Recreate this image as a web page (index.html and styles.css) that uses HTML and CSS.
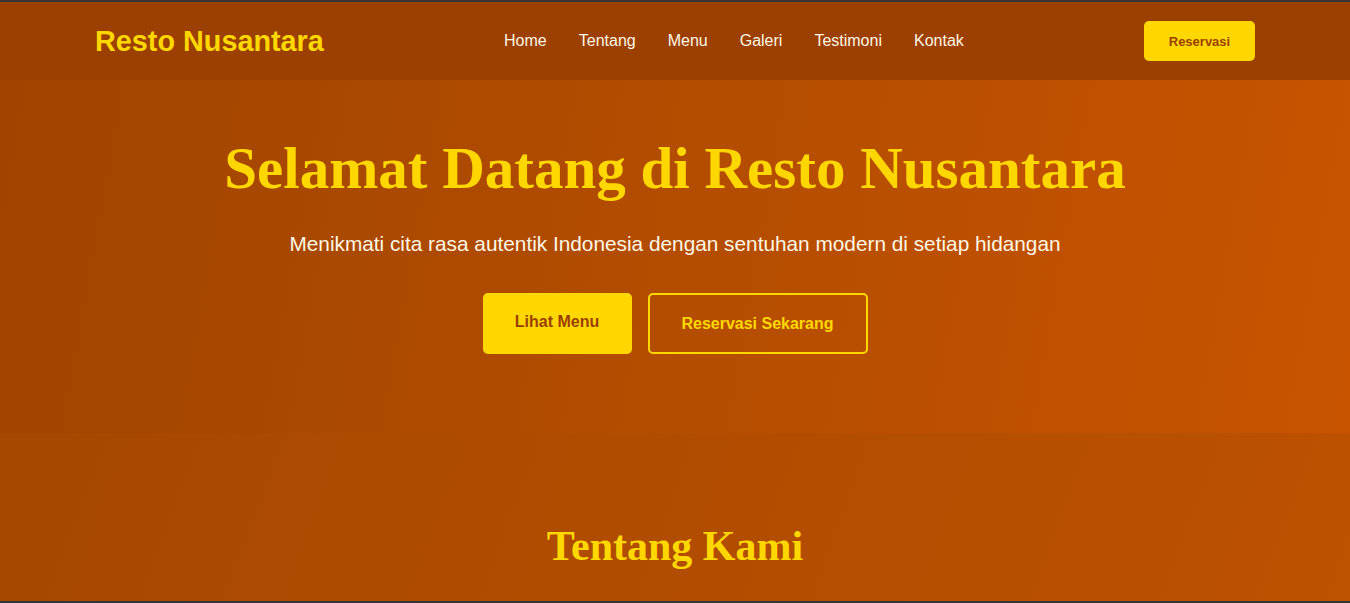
FILE: index.html
```html
<!DOCTYPE html>
<html lang="id">
<head>
<meta charset="utf-8">
<title>Resto Nusantara</title>
<link rel="stylesheet" href="styles.css">
</head>
<body>
<div class="frame">
  <header class="navbar">
    <div class="container nav-inner">
      <a class="logo" href="#">Resto Nusantara</a>
      <nav class="nav-links">
        <a href="#">Home</a>
        <a href="#">Tentang</a>
        <a href="#">Menu</a>
        <a href="#">Galeri</a>
        <a href="#">Testimoni</a>
        <a href="#">Kontak</a>
      </nav>
      <a class="btn-nav" href="#">Reservasi</a>
    </div>
  </header>

  <section class="hero">
    <h1 class="hero-title">Selamat Datang di Resto Nusantara</h1>
    <p class="hero-sub">Menikmati cita rasa autentik Indonesia dengan sentuhan modern di setiap hidangan</p>
    <div class="hero-actions">
      <a class="btn btn-solid" href="#">Lihat Menu</a>
      <a class="btn btn-outline" href="#">Reservasi Sekarang</a>
    </div>
  </section>

  <section class="about">
    <h2 class="section-title">Tentang Kami</h2>
  </section>
</div>
</body>
</html>
```

FILE: styles.css
```css
html {
  background: #353535;
}
body {
  margin: 0;
  font-family: "Liberation Sans", Arial, sans-serif;
}
a {
  text-decoration: none;
}
.frame {
  height: 599px;
  margin: 2px 0;
  overflow: hidden;
  background: linear-gradient(110deg, #a44700 0%, #b24d00 60%, #bd5200 100%);
}
.container {
  max-width: 1200px;
  margin: 0 auto;
  padding: 0 20px;
  box-sizing: border-box;
}
.navbar {
  background: #9b4000;
  height: 78px;
}
.nav-inner {
  height: 100%;
  display: flex;
  align-items: center;
  justify-content: space-between;
}
.logo {
  color: #ffd700;
  font-weight: bold;
  font-size: 28.8px;
  line-height: 1;
}
.nav-links {
  display: flex;
  gap: 32px;
}
.nav-links a {
  color: #fff6e6;
  font-size: 16px;
}
.btn-nav {
  background: #ffd700;
  color: #9a3f00;
  font-weight: bold;
  font-size: 13px;
  width: 111px;
  height: 40px;
  display: flex;
  align-items: center;
  justify-content: center;
  border-radius: 5px;
}
.hero {
  height: 353px;
  box-sizing: border-box;
  padding: 53px 20px 0;
  text-align: center;
  background: linear-gradient(100deg, #a04400 0%, #b14c00 45%, #c85400 100%);
}
.hero-title {
  margin: 0;
  font-family: "Liberation Serif", "Times New Roman", serif;
  font-weight: bold;
  font-size: 59px;
  line-height: 71px;
  color: #ffd700;
}
.hero-sub {
  margin: 25px 0 0;
  font-size: 20.8px;
  line-height: 30px;
  color: #fff6e6;
}
.hero-actions {
  margin-top: 34px;
  display: flex;
  justify-content: center;
  gap: 16px;
}
.btn {
  box-sizing: border-box;
  height: 61px;
  display: flex;
  align-items: center;
  justify-content: center;
  font-weight: bold;
  font-size: 16px;
  border-radius: 5px;
}
.btn-solid {
  width: 149px;
  background: #ffd700;
  color: #9a3f00;
  padding-bottom: 4px;
}
.btn-outline {
  width: 220px;
  border: 2px solid #ffd700;
  color: #ffd700;
}
.about {
  padding-top: 89px;
  text-align: center;
}
.section-title {
  margin: 0;
  font-family: "Liberation Serif", "Times New Roman", serif;
  font-weight: bold;
  font-size: 42px;
  line-height: 49px;
  color: #ffd700;
}
```
